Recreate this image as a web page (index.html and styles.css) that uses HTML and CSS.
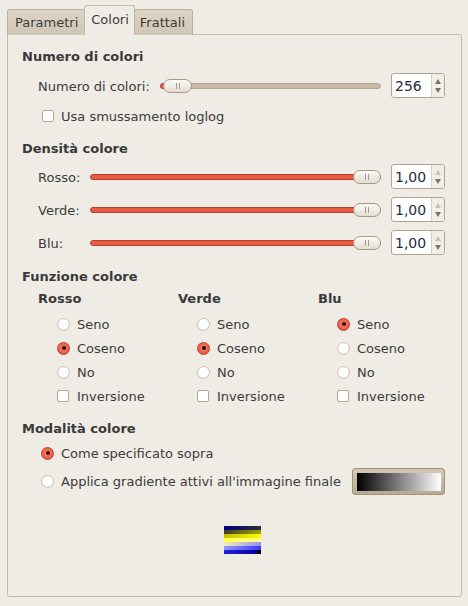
FILE: index.html
```html
<!DOCTYPE html>
<html>
<head>
<meta charset="utf-8">
<link rel="stylesheet" href="styles.css">
</head>
<body>
<div class="notebook">
  <div class="tabs">
    <div class="tab first">Parametri</div>
    <div class="tab active">Colori</div>
    <div class="tab last">Frattali</div>
  </div>
  <div class="panel">
    <div class="heading h1">Numero di colori</div>
    <div class="srow r-first">
      <div class="slabel wide">Numero di colori:</div>
      <div class="trough beige"><div class="fill" style="width:5px"></div><div class="knob kn-left"><span></span></div></div>
      <div class="spin"><div class="val">256</div><div class="arrows"><span class="up on"></span><span class="down on"></span></div></div>
    </div>
    <div class="crow">
      <span class="check"></span><span>Usa smussamento loglog</span>
    </div>

    <div class="heading h2">Densità colore</div>
    <div class="srow r2">
      <div class="slabel">Rosso:</div>
      <div class="trough red"><div class="knob kn-right"><span></span></div></div>
      <div class="spin"><div class="val">1,00</div><div class="arrows"><span class="up"></span><span class="down on"></span></div></div>
    </div>
    <div class="srow r3">
      <div class="slabel">Verde:</div>
      <div class="trough red"><div class="knob kn-right"><span></span></div></div>
      <div class="spin"><div class="val">1,00</div><div class="arrows"><span class="up"></span><span class="down on"></span></div></div>
    </div>
    <div class="srow r3">
      <div class="slabel">Blu:</div>
      <div class="trough red"><div class="knob kn-right"><span></span></div></div>
      <div class="spin"><div class="val">1,00</div><div class="arrows"><span class="up"></span><span class="down on"></span></div></div>
    </div>

    <div class="heading h3">Funzione colore</div>
    <div class="cols">
      <div class="col">
        <div class="colhead">Rosso</div>
        <div class="opt"><span class="radio"></span>Seno</div>
        <div class="opt"><span class="radio sel"></span>Coseno</div>
        <div class="opt"><span class="radio"></span>No</div>
        <div class="opt"><span class="check"></span>Inversione</div>
      </div>
      <div class="col">
        <div class="colhead">Verde</div>
        <div class="opt"><span class="radio"></span>Seno</div>
        <div class="opt"><span class="radio sel"></span>Coseno</div>
        <div class="opt"><span class="radio"></span>No</div>
        <div class="opt"><span class="check"></span>Inversione</div>
      </div>
      <div class="col">
        <div class="colhead">Blu</div>
        <div class="opt"><span class="radio sel"></span>Seno</div>
        <div class="opt"><span class="radio"></span>Coseno</div>
        <div class="opt"><span class="radio"></span>No</div>
        <div class="opt"><span class="check"></span>Inversione</div>
      </div>
    </div>

    <div class="heading h4">Modalità colore</div>
    <div class="mrow m1"><span class="radio sel"></span>Come specificato sopra</div>
    <div class="mrow m2"><span class="radio"></span><span class="mtext">Applica gradiente attivi all'immagine finale</span>
      <div class="gradbtn"><div class="grad"></div></div>
    </div>

    <div class="preview">
      <div class="st s1"></div>
      <div class="st s2"></div>
      <div class="st s3"></div>
      <div class="st s4"></div>
      <div class="st s5"></div>
      <div class="st s6"></div>
      <div class="st s7"></div>
    </div>
  </div>
</div>
</body>
</html>
```
FILE: styles.css
```css
* { box-sizing: border-box; }
html, body { margin: 0; padding: 0; }
body {
  width: 468px;
  height: 606px;
  background: #efebe5;
  font-family: "DejaVu Sans", sans-serif;
  font-size: 13px;
  color: #3c3c3c;
  overflow: hidden;
}
.notebook {
  height: 606px;
  padding: 6px 6px 9px 7px;
  display: flex;
  flex-direction: column;
}
.tabs {
  display: flex;
  align-items: flex-end;
  height: 29px;
  margin-bottom: -1px;
  position: relative;
  z-index: 1;
}
.tab {
  height: 26px;
  padding: 0 5px 0 6px;
  line-height: 26px;
  border: 1px solid #bcb09b;
  border-bottom: none;
  border-radius: 3px 3px 0 0;
  background: linear-gradient(#ddd5c7, #cfc5b3);
  color: #3c3c3c;
}
.tab.first { padding: 0 6px 0 7px; }
.tab.last { padding: 0 7px 0 5px; }
.tab + .tab { margin-left: -1px; }
.tab.active {
  height: 30px;
  line-height: 28px;
  padding: 0 5px 0 6px;
  background: #efebe5;
  border-color: #c6bba8;
}
.panel {
  flex: 1;
  border: 1px solid #c6bba8;
  border-radius: 0 3px 3px 3px;
  padding: 12px 16px 0 14px;
  display: flex;
  flex-direction: column;
}
.heading {
  font-weight: bold;
  height: 19px;
  line-height: 19px;
  color: #3a3a3a;
}
.h2 { margin-top: 11px; }
.h3 { margin-top: 12px; }
.h4 { margin-top: 11px; }

.srow {
  display: flex;
  align-items: center;
  height: 25px;
  padding-left: 16px;
}
.r-first { margin-top: 7px; }
.r2 { margin-top: 6px; }
.r3 { margin-top: 8px; }
.slabel { width: 52px; flex: none; padding-top: 1px; }
.slabel.wide { width: 122px; }
.trough {
  flex: 1;
  height: 6px;
  border-radius: 3px;
  position: relative;
  margin-right: 10px;
}
.trough.beige {
  background: #c8bba5;
  border: 1px solid #b3a58d;
}
.trough.red {
  background: #ea5b45;
  border: 1px solid #b9402e;
}
.fill {
  position: absolute;
  left: -1px; top: -1px; bottom: -1px;
  background: #ea5b45;
  border: 1px solid #b9402e;
  border-radius: 3px 0 0 3px;
}
.knob {
  position: absolute;
  top: -5px;
  width: 29px;
  height: 14px;
  border: 1px solid #a8987f;
  border-radius: 7px;
  background: linear-gradient(#fbfaf7, #e4ddd1);
  display: flex;
  align-items: center;
  justify-content: center;
}
.knob span {
  width: 4px;
  height: 6px;
  border-left: 1px solid #a59a88;
  border-right: 1px solid #a59a88;
}
.kn-left { left: 2px; }
.kn-right { right: -1px; width: 28px; }
.spin {
  width: 54px;
  height: 25px;
  flex: none;
  border: 1px solid #b3a58d;
  border-radius: 3px;
  display: flex;
  background: #fff;
  overflow: hidden;
}
.val {
  flex: 1;
  padding-left: 3px;
  line-height: 24px;
  font-size: 14px;
  color: #2b2b3b;
}
.arrows {
  width: 13px;
  border-left: 1px solid #d8d0c2;
  background: #f1ede7;
  display: flex;
  flex-direction: column;
  align-items: center;
  justify-content: space-around;
  padding: 3px 0 2px;
}
.arrows span {
  width: 0; height: 0;
  border-left: 3px solid transparent;
  border-right: 3px solid transparent;
}
.arrows .up { border-bottom: 5px solid #c7c0b4; }
.arrows .down { border-top: 5px solid #c7c0b4; }
.arrows .up.on { border-bottom-color: #7a7268; }
.arrows .down.on { border-top-color: #7a7268; }

.crow {
  display: flex;
  align-items: center;
  height: 24px;
  margin-top: 6px;
  padding-left: 20px;
}
.check {
  width: 12px;
  height: 12px;
  flex: none;
  border: 1px solid #b4a890;
  border-radius: 2px;
  background: #fff;
  margin-right: 7px;
}
.radio {
  width: 13px;
  height: 13px;
  flex: none;
  border: 1px solid #c9bfae;
  border-radius: 50%;
  background: radial-gradient(circle at 50% 40%, #ffffff 55%, #eee8de);
  margin-right: 7px;
  position: relative;
}
.radio.sel {
  border-color: #c0402c;
  background: radial-gradient(circle at 50% 45%, #f98a72, #e9503a 80%);
}
.radio.sel::after {
  content: "";
  position: absolute;
  left: 3.5px; top: 3.5px;
  width: 4px; height: 4px;
  border-radius: 50%;
  background: #2a1410;
}

.cols {
  display: flex;
  margin-top: 4px;
  padding-left: 16px;
}
.col { width: 140px; flex: none; }
.colhead {
  font-weight: bold;
  height: 18px;
  line-height: 18px;
  color: #3a3a3a;
  margin-bottom: 4px;
}
.opt {
  display: flex;
  align-items: center;
  height: 24px;
  padding-left: 19px;
}
.opt .check { margin-right: 8px; }

.mrow {
  display: flex;
  align-items: center;
  padding-left: 19px;
}
.m1 { height: 24px; margin-top: 3px; }
.m2 { height: 27px; margin-top: 3px; }
.mtext { flex: 1; }
.gradbtn {
  width: 93px;
  height: 27px;
  border: 1px solid #a29479;
  border-radius: 3px;
  background: linear-gradient(#d2c8b6, #b8aa92);
  padding: 4px 3px 3px 4px;
}
.grad {
  width: 100%;
  height: 100%;
  background: linear-gradient(to right, #000, #fff);
}
.preview {
  margin: 31px 0 0 202px;
  width: 37px;
  display: flex;
  flex-direction: column;
}
.st { height: 4px; }
.s1 { background: linear-gradient(to right, #000080, #303030); }
.s2 { background: linear-gradient(to right, #3a3a28, #a4a400); }
.s3 { background: linear-gradient(to right, #c0c000, #ffff00); }
.s4 { background: linear-gradient(to right, #ffff40, #ffff90); }
.s5 { background: linear-gradient(to right, #f0f0b8, #9090f8); }
.s6 { background: linear-gradient(to right, #9898f8, #3838f0); }
.s7 { background: linear-gradient(to right, #2020e0 0%, #00009a 90%, #000 90%); }
```
